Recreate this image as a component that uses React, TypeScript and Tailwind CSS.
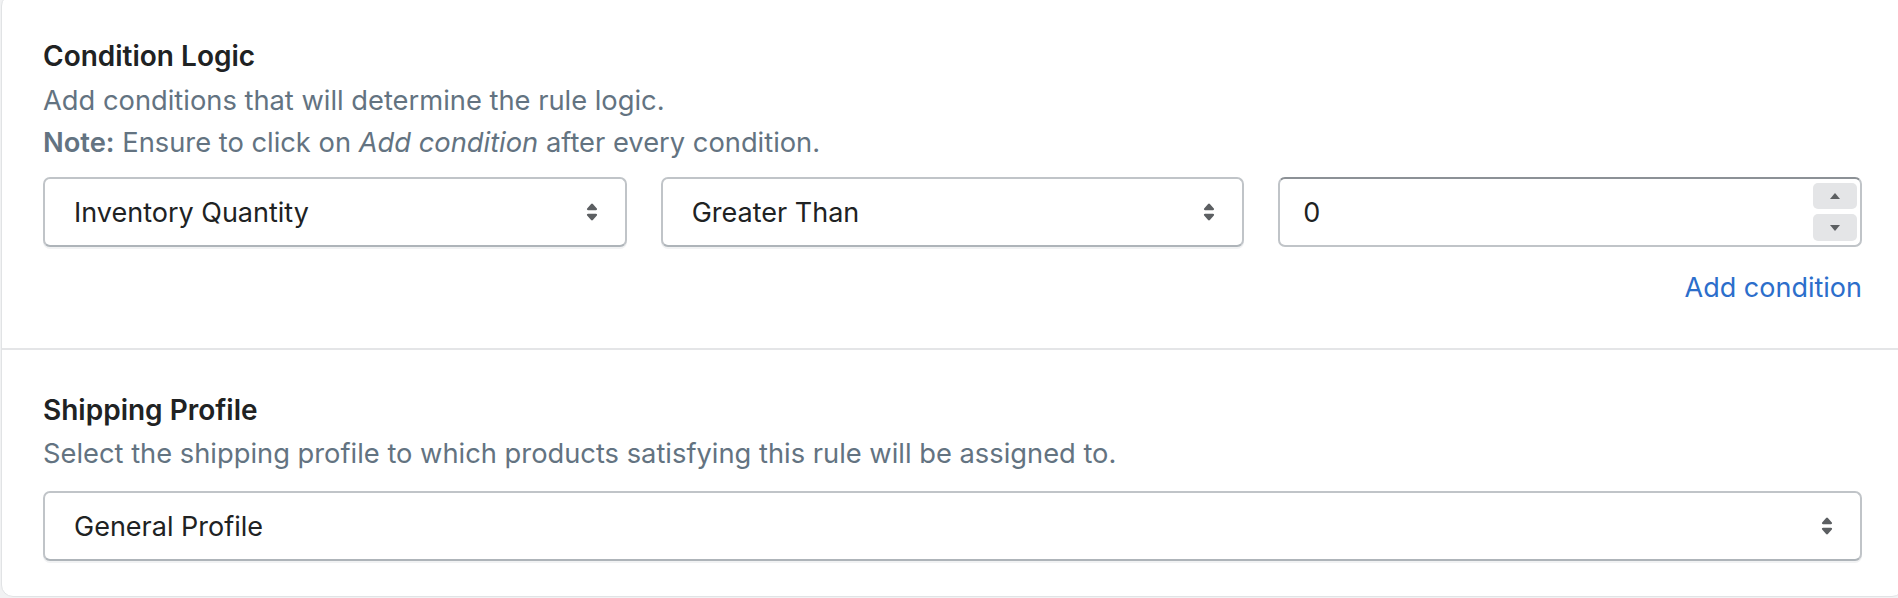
import React from 'react'

const font = { fontFamily: 'Inter, "Noto Sans", "Liberation Sans", sans-serif' }

function SelectArrows() {
  return (
    <svg viewBox="0 0 20 20" className="h-[34px] w-[34px] shrink-0 fill-[#5c5f62]">
      <path d="M7.676 9h4.648c.563 0 .879-.603.53-1.014l-2.323-2.746a.708.708 0 0 0-1.062 0l-2.324 2.746c-.347.411-.032 1.014.531 1.014Zm4.648 2h-4.648c-.563 0-.878.603-.53 1.014l2.323 2.746c.27.32.792.32 1.062 0l2.323-2.746c.349-.411.033-1.014-.53-1.014Z" />
    </svg>
  )
}

function FakeSelect({ value }: { value: string }) {
  return (
    <div className="flex h-[70px] items-center justify-between rounded-[7px] border-2 border-[#c0c4c8] border-b-[#aeb4b9] bg-white pr-[16px] pl-[29px] shadow-[0_2px_0_#f1f2f3]">
      <span className="text-[27px] leading-none text-[#202223]">{value}</span>
      <SelectArrows />
    </div>
  )
}

function NumberField({ value }: { value: string }) {
  return (
    <div className="flex h-[70px] items-center justify-between rounded-[7px] border-2 border-[#c0c4c8] border-t-[#8c9196] bg-white pr-[3px] pl-[23px]">
      <span className="text-[27px] leading-none text-[#202223]">{value}</span>
      <div className="flex flex-col gap-[5px]">
        <div className="flex h-[26px] w-[44px] items-center justify-center rounded-[5px] bg-[#e4e5e7]">
          <svg viewBox="0 0 10 6" className="h-[6px] w-[10px] fill-[#5c5f62]">
            <path d="M5 0 10 6H0Z" />
          </svg>
        </div>
        <div className="flex h-[27px] w-[44px] items-center justify-center rounded-[5px] bg-[#e4e5e7]">
          <svg viewBox="0 0 10 6" className="h-[6px] w-[10px] fill-[#5c5f62]">
            <path d="M0 0h10L5 6Z" />
          </svg>
        </div>
      </div>
    </div>
  )
}

export default function App() {
  return (
    <div className="h-[598px] w-full overflow-hidden bg-[#f1f2f3]" style={font}>
      <div className="-mt-[6px] ml-[1px] w-[1903px] rounded-[12px] border border-[#e1e3e5] bg-white">
        {/* Condition logic */}
        <section className="px-[41px] pt-[41px] pb-[40px]">
          <h2 className="text-[28px] leading-[41px] font-semibold text-[#202223]">
            Condition Logic
          </h2>
          <p className="mt-[3px] text-[27.3px] leading-[42px] text-[#637381]">
            Add conditions that will determine the rule logic.
          </p>
          <p className="text-[27.3px] leading-[42px] text-[#637381]">
            <span className="font-semibold">Note:</span> Ensure to click on{' '}
            <em>Add condition</em> after every condition.
          </p>
          <div className="mt-[13px] grid grid-cols-3 gap-[34px]">
            <FakeSelect value="Inventory Quantity" />
            <FakeSelect value="Greater Than" />
            <NumberField value="0" />
          </div>
          <div className="mt-[20px] flex justify-end">
            <button className="text-[27px] leading-[41px] text-[#2c6ecb]">
              Add condition
            </button>
          </div>
        </section>

        <div className="h-[2px] bg-[#e4e5e7]" />

        {/* Shipping profile */}
        <section className="px-[41px] pt-[40px] pb-[35px]">
          <h2 className="text-[28px] leading-[41px] font-semibold text-[#202223]">
            Shipping Profile
          </h2>
          <p className="mt-[2px] text-[27.3px] leading-[42px] text-[#637381]">
            Select the shipping profile to which products satisfying this rule
            will be assigned to.
          </p>
          <div className="mt-[16px]">
            <FakeSelect value="General Profile" />
          </div>
        </section>
      </div>
    </div>
  )
}
